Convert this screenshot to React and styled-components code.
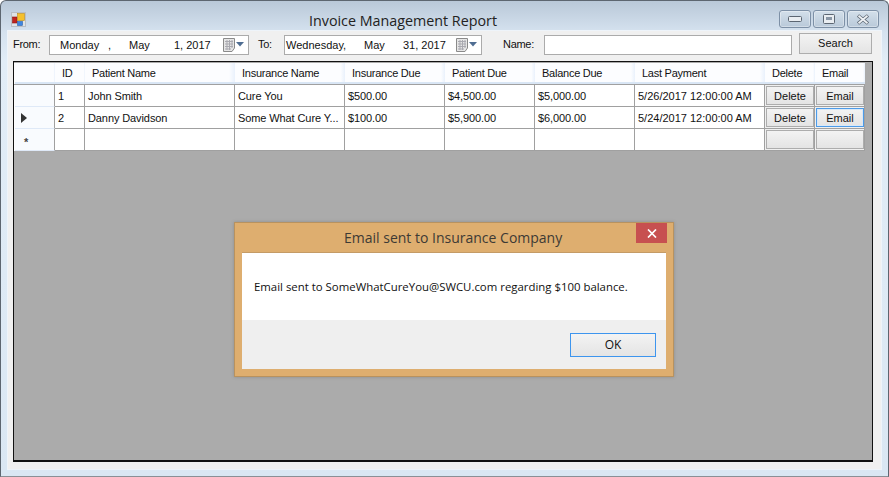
// Packages
import React from "react"
import styled, { createGlobalStyle } from "styled-components"

// Data
const columns = ["ID", "Patient Name", "Insurance Name", "Insurance Due", "Patient Due", "Balance Due", "Last Payment", "Delete", "Email"]

const rows = [
    { id: "1", name: "John Smith", insurance: "Cure You", insDue: "$500.00", patDue: "$4,500.00", balance: "$5,000.00", last: "5/26/2017 12:00:00 AM" },
    { id: "2", name: "Danny Davidson", insurance: "Some What Cure Y...", insDue: "$100.00", patDue: "$5,900.00", balance: "$6,000.00", last: "5/24/2017 12:00:00 AM", current: true },
]

// Styles
const GlobalStyle = createGlobalStyle`
    html, body {
        margin: 0;
        padding: 0;
        background: #fff;
        overflow: hidden;
    }
`

const Window = styled.div`
    position: relative;
    width: 889px;
    height: 477px;
    box-sizing: border-box;
    border: 1px solid #5d6670;
    border-bottom-color: #8a9096;
    border-radius: 6px 6px 0 0;
    padding: 0 7px 7px 7px;
    background: linear-gradient(#b9c8d8 0, #d5e2ef 31px, #e2edf7 60px, #dae7f3 100%);
    font-family: "Liberation Sans", Arial, sans-serif;
    font-size: 11px;
    color: #111;
    display: flex;
    flex-direction: column;
`

const TitleBar = styled.div`
    height: 30px;
    flex: none;
    display: flex;
    align-items: flex-start;
`

const AppIcon = styled.svg`
    width: 15px;
    height: 15px;
    margin: 11px 0 0 3px;
    flex: none;
`

const Title = styled.div`
    margin: 10px 0 0 283px;
    font-family: "Open Sans", sans-serif;
    font-size: 14.3px;
    line-height: 20px;
    color: #222;
`

const Controls = styled.div`
    margin: 9px 2px 0 auto;
    display: flex;
    gap: 2px;
`

const ControlButton = styled.div`
    width: 32px;
    height: 18px;
    box-sizing: border-box;
    border: 1px solid #7d90a6;
    border-radius: 3px;
    background: linear-gradient(#d3dfea, #b9c9d9);
    box-shadow: inset 0 0 0 1px rgba(255, 255, 255, 0.35);
    display: flex;
    align-items: center;
    justify-content: center;
`

const Client = styled.div`
    flex: 1;
    min-height: 0;
    background: #f0f0f0;
    box-shadow: 0 0 0 1px #eef4fa;
    padding: 0 8px 7px 5px;
    display: flex;
    flex-direction: column;
`

const Toolbar = styled.div`
    height: 30px;
    flex: none;
    display: flex;
    align-items: flex-start;
`

const Label = styled.label`
    margin: 6px 0 0 ${(p) => p.$left}px;
    width: ${(p) => p.$width}px;
    line-height: 15px;
    letter-spacing: -0.3px;
`

const DatePicker = styled.div`
    margin-top: 4px;
    width: ${(p) => p.$width}px;
    height: 20px;
    box-sizing: border-box;
    border: 1px solid #ababab;
    background: #fff;
    display: flex;
    align-items: center;
    line-height: 16px;
`

const DatePart = styled.span`
    flex: none;
    width: ${(p) => p.$width}px;
    white-space: nowrap;
`

const CalendarIcon = styled.svg`
    width: 21px;
    height: 14px;
    flex: none;
    margin-left: auto;
    margin-right: 4px;
`

const TextInput = styled.div`
    margin-top: 4px;
    width: 248px;
    height: 20px;
    box-sizing: border-box;
    border: 1px solid #ababab;
    background: #fff;
`

const Button = styled.button`
    box-sizing: border-box;
    padding: 0 0 2px;
    margin: 0;
    font: inherit;
    line-height: normal;
    color: #111;
    border: 1px solid #adadad;
    background: linear-gradient(#f3f3f3, #e4e4e4);
    display: block;
`

const SearchButton = styled(Button)`
    margin: 2px 0 0 7px;
    width: 73px;
    height: 21px;
`

const GridFrame = styled.div`
    flex: 1;
    min-height: 0;
    border: 1px solid #111;
    border-width: 1px 1px 2px 1px;
    background: #ababab;
    padding-top: 1px;
    box-sizing: border-box;
`

const Row = styled.div`
    display: grid;
    grid-template-columns: 1px 40px 30px 150px 110px 100px 90px 100px 130px 50px 50px;
    grid-auto-rows: 22px;
    width: 851px;
`

const HeaderRow = styled(Row)`
    grid-auto-rows: auto;
`

const HeaderCell = styled.div`
    background: linear-gradient(90deg, #fcfdff 0, #fcfdff 96%, #e9f1fc 100%);
    border-bottom: 2px solid #d9e6f5;
    box-sizing: border-box;
    padding-left: 7px;
    line-height: 21px;
    height: 21px;
    letter-spacing: -0.25px;
    white-space: nowrap;
`

const HeaderLine = styled.div`
    grid-column: 1 / -1;
    height: 1px;
    background: #a0a0a0;
`

const Edge = styled.div`
    background: #fdfdfd;
`

const RowHeader = styled.div`
    background: #f9fbfe;
    border-right: 1px solid #a0a0a0;
    border-bottom: 1px solid #dfe9f7;
    box-sizing: border-box;
    display: flex;
    align-items: center;
`

const Cell = styled.div`
    background: #fff;
    border-right: 1px solid #a0a0a0;
    border-bottom: 1px solid #a0a0a0;
    box-sizing: border-box;
    padding-left: 3px;
    line-height: 22px;
    white-space: nowrap;
    overflow: hidden;
    letter-spacing: ${(p) => (p.$date ? "0" : "-0.1px")};
`

const ButtonCell = styled(Cell)`
    padding: 1px;
    background: #f0f0f0;
    letter-spacing: 0;
`

const GridButton = styled(Button)`
    width: 48px;
    height: 19px;
    padding: 0;
    ${(p) => p.$focused && "border: 1px solid #4d9be8; box-shadow: inset 0 0 0 1px #d8e8f8;"}
`

const Current = styled.svg`
    width: 6px;
    height: 10px;
    margin-left: 6px;
`

const NewRow = styled.span`
    margin-left: 9px;
    font-size: 11px;
    font-weight: bold;
    line-height: 21px;
    color: #444;
    padding-top: 5px;
`

const Dialog = styled.div`
    position: absolute;
    left: 233px;
    top: 221px;
    width: 440px;
    height: 155px;
    box-sizing: border-box;
    background: #deae6f;
    border: 1px solid #b8925f;
    box-shadow: 0 0 3px rgba(90, 90, 90, 0.35);
    padding: 0 7px 7px 7px;
    display: flex;
    flex-direction: column;
    font-family: "Open Sans", sans-serif;
`

const DialogTitle = styled.div`
    height: 29px;
    flex: none;
    display: flex;
    align-items: flex-start;
`

const DialogCaption = styled.div`
    margin: 4px 0 0 102px;
    font-size: 14px;
    line-height: 22px;
    color: #3d3a35;
`

const DialogClose = styled.div`
    margin-left: auto;
    margin-right: -1px;
    width: 31px;
    height: 20px;
    background: #c75050;
    display: flex;
    align-items: center;
    justify-content: center;
`

const DialogBody = styled.div`
    flex: 1;
    display: flex;
    flex-direction: column;
    border-top: 1px solid #c49b66;
    background: #fff;
`

const Message = styled.div`
    height: 67px;
    box-sizing: border-box;
    padding: 25px 0 0 12px;
    font-size: 11.4px;
    line-height: 18px;
    color: #111;
    white-space: nowrap;
`

const DialogFooter = styled.div`
    flex: 1;
    background: #efefef;
    display: flex;
    justify-content: flex-end;
    align-items: flex-start;
    padding: 13px 10px 0 0;
`

const OkButton = styled(Button)`
    width: 86px;
    height: 24px;
    border-color: #3d95ee;
    font-family: "Open Sans", sans-serif;
    font-size: 12px;
`

function CalendarGlyph() {
    return (
        <CalendarIcon viewBox="0 0 21 14">
            <path d="M0.5 0.5H11.5V10L9 13.5H0.5Z" fill="#e6e6e6" stroke="#8a8a8a" />
            <path d="M2 3.5H10M2 6H10M2 8.5H10M2 11H8M4 2V12M6.5 2V12M9 2V10" stroke="#a9a9b0" strokeWidth="1" fill="none" />
            <path d="M13 4H21L17 8.5Z" fill="#4f6d92" />
        </CalendarIcon>
    )
}

function DateField({ width, parts }) {
    return (
        <DatePicker $width={width}>
            {parts.map(([text, w], i) => (
                <DatePart key={i} $width={w}>{text}</DatePart>
            ))}
            <CalendarGlyph />
        </DatePicker>
    )
}

function App() {
    return (
        <>
            <GlobalStyle />
            <Window>
                <TitleBar>
                    <AppIcon viewBox="0 0 15 15">
                        <rect x="0.5" y="0.5" width="14" height="14" fill="#dfe3e6" stroke="#b9bec4" />
                        <rect x="1.5" y="5" width="4.5" height="6" fill="#c0241f" stroke="#8a1714" strokeWidth="0.6" />
                        <rect x="6.5" y="1.5" width="7" height="7" fill="#f5c02c" stroke="#b98b18" strokeWidth="0.6" />
                        <rect x="6.5" y="9.5" width="5" height="4" fill="#3f86e0" stroke="#2a62ab" strokeWidth="0.6" />
                    </AppIcon>
                    <Title>Invoice Management Report</Title>
                    <Controls>
                        <ControlButton>
                            <svg width="14" height="6" viewBox="0 0 14 6">
                                <rect x="0.5" y="0.5" width="13" height="5" rx="1" fill="#e9edf1" stroke="#5c6672" />
                            </svg>
                        </ControlButton>
                        <ControlButton>
                            <svg width="12" height="10" viewBox="0 0 12 10">
                                <rect x="0.5" y="0.5" width="11" height="9" rx="1" fill="#e9edf1" stroke="#5c6672" />
                                <rect x="3" y="3" width="6" height="3" fill="#8a97a6" />
                            </svg>
                        </ControlButton>
                        <ControlButton>
                            <svg width="14" height="11" viewBox="0 0 14 11">
                                <path d="M2 1.5L12 9.5M12 1.5L2 9.5" stroke="#5c6672" strokeWidth="3.4" />
                                <path d="M2.5 1.8L11.5 9.2M11.5 1.8L2.5 9.2" stroke="#eef1f4" strokeWidth="1.8" />
                            </svg>
                        </ControlButton>
                    </Controls>
                </TitleBar>
                <Client>
                    <Toolbar>
                        <Label $width={36} $left={0}>From:</Label>
                        <DateField width={200} parts={[["", 10], ["Monday", 48], [",", 21], ["May", 45], ["1, 2017", 40]]} />
                        <Label $width={26} $left={9}>To:</Label>
                        <DateField width={198} parts={[["", 1], ["Wednesday,", 78], ["May", 39], ["31, 2017", 46]]} />
                        <Label $width={41} $left={21}>Name:</Label>
                        <TextInput />
                        <SearchButton>Search</SearchButton>
                    </Toolbar>
                    <GridFrame>
                        <HeaderRow>
                            <Edge />
                            <HeaderCell />
                            {columns.map((c) => <HeaderCell key={c}>{c}</HeaderCell>)}
                            <HeaderLine />
                        </HeaderRow>
                        {rows.map((r) => (
                            <Row key={r.id}>
                                <Edge />
                                <RowHeader>
                                    {r.current && (
                                        <Current viewBox="0 0 6 10">
                                            <path d="M0 0L6 5L0 10Z" fill="#333" />
                                        </Current>
                                    )}
                                </RowHeader>
                                <Cell>{r.id}</Cell>
                                <Cell>{r.name}</Cell>
                                <Cell>{r.insurance}</Cell>
                                <Cell>{r.insDue}</Cell>
                                <Cell>{r.patDue}</Cell>
                                <Cell>{r.balance}</Cell>
                                <Cell $date>{r.last}</Cell>
                                <ButtonCell><GridButton>Delete</GridButton></ButtonCell>
                                <ButtonCell><GridButton $focused={r.current}>Email</GridButton></ButtonCell>
                            </Row>
                        ))}
                        <Row>
                            <Edge />
                            <RowHeader><NewRow>*</NewRow></RowHeader>
                            <Cell /><Cell /><Cell /><Cell /><Cell /><Cell /><Cell />
                            <ButtonCell><GridButton /></ButtonCell>
                            <ButtonCell><GridButton /></ButtonCell>
                        </Row>
                    </GridFrame>
                </Client>
                <Dialog>
                    <DialogTitle>
                        <DialogCaption>Email sent to Insurance Company</DialogCaption>
                        <DialogClose>
                            <svg width="10" height="9" viewBox="0 0 10 9">
                                <path d="M1 0.5L9 8.5M9 0.5L1 8.5" stroke="#fff" strokeWidth="1.7" />
                            </svg>
                        </DialogClose>
                    </DialogTitle>
                    <DialogBody>
                        <Message>Email sent to SomeWhatCureYou@SWCU.com regarding $100 balance.</Message>
                        <DialogFooter><OkButton>OK</OkButton></DialogFooter>
                    </DialogBody>
                </Dialog>
            </Window>
        </>
    )
}

export default App
